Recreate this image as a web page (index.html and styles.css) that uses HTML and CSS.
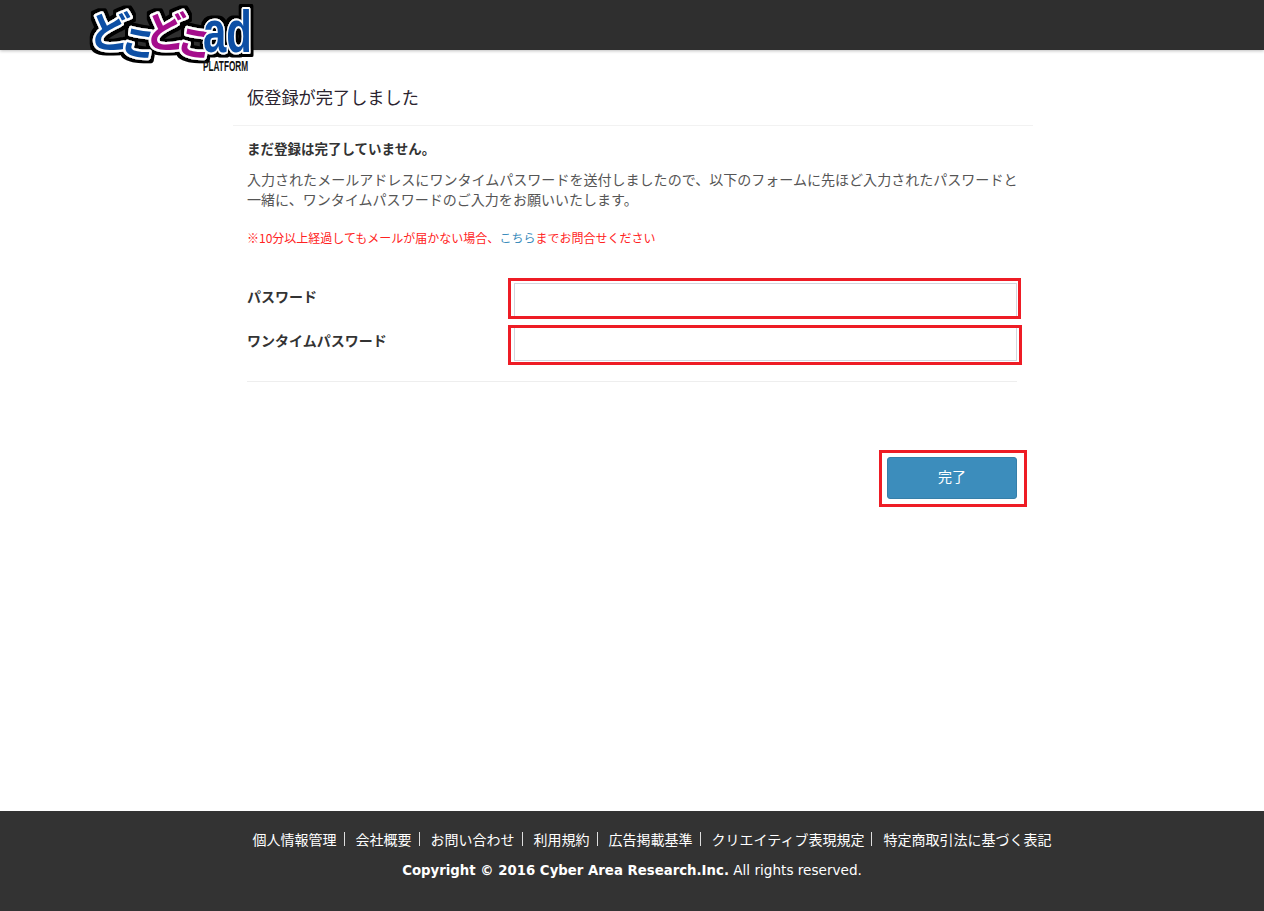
FILE: index.html
```html
<!DOCTYPE html>
<html lang="ja">
<head>
<meta charset="utf-8">
<title>仮登録が完了しました</title>
<link rel="stylesheet" href="styles.css">
</head>
<body>
<header class="site-header">
  <a class="logo" href="#" aria-label="どこどこad PLATFORM">
    <svg width="176" height="72" viewBox="0 0 176 72">
      <defs>
        <filter id="logo-outline" x="-5%" y="-10%" width="110%" height="120%">
          <feMorphology in="SourceAlpha" operator="dilate" radius="2.5" result="fat"/>
          <feFlood flood-color="#000"/>
          <feComposite in2="fat" operator="in" result="edge"/>
          <feMerge>
            <feMergeNode in="edge"/>
            <feMergeNode in="SourceGraphic"/>
          </feMerge>
        </filter>
      </defs>
      <g filter="url(#logo-outline)">
        <text class="logo-word"><tspan class="kana blue" x="5" y="45">ど</tspan><tspan class="kana small blue" x="36" y="50" rotate="10">こ</tspan><tspan class="kana purple" x="61" y="45">ど</tspan><tspan class="kana small purple" x="92" y="50" rotate="10">こ</tspan></text>
        <text class="latin" transform="translate(119 50) scale(.71 1)">ad</text>
      </g>
      <text class="platform" transform="translate(119 69) scale(.55 1)">PLATFORM</text>
    </svg>
  </a>
</header>
<main class="content">
  <h1 class="title">仮登録が完了しました</h1>
  <div class="body">
    <p class="lead">まだ登録は完了していません。</p>
    <p class="desc">入力されたメールアドレスにワンタイムパスワードを送付しましたので、以下のフォームに先ほど入力されたパスワードと一緒に、ワンタイムパスワードのご入力をお願いいたします。</p>
    <p class="notice">※10分以上経過してもメールが届かない場合、<a href="#">こちら</a>までお問合せください</p>
    <form class="form">
      <div class="row">
        <label class="label">パスワード</label>
        <div class="field">
          <input class="input" type="password">
          <span class="mark mark-a"></span>
        </div>
      </div>
      <div class="row">
        <label class="label">ワンタイムパスワード</label>
        <div class="field">
          <input class="input" type="text">
          <span class="mark mark-b"></span>
        </div>
      </div>
      <div class="actions">
        <div class="button-wrap">
          <button class="button" type="button">完了</button>
          <span class="mark mark-c"></span>
        </div>
      </div>
    </form>
  </div>
</main>
<footer class="site-footer">
  <ul class="links">
    <li><a href="#">個人情報管理</a></li>
    <li><a href="#">会社概要</a></li>
    <li><a href="#">お問い合わせ</a></li>
    <li><a href="#">利用規約</a></li>
    <li><a href="#">広告掲載基準</a></li>
    <li><a href="#">クリエイティブ表現規定</a></li>
    <li><a href="#">特定商取引法に基づく表記</a></li>
  </ul>
  <p class="copy"><strong>Copyright © 2016 Cyber Area Research.Inc.</strong> All rights reserved.</p>
</footer>
</body>
</html>
```
FILE: styles.css
```css
* { box-sizing: border-box; }
html, body { height: 100%; }
body {
  margin: 0;
  min-height: 911px;
  display: flex;
  flex-direction: column;
  background: #fff;
  color: #333;
  font-family: "Noto Sans CJK JP", sans-serif;
  font-size: 14px;
}
a { text-decoration: none; }

.site-header {
  position: relative;
  height: 50px;
  flex: none;
  background: #2f2f2f;
  box-shadow: 0 1px 3px rgba(0, 0, 0, .25);
}
.logo { position: absolute; left: 84px; top: 2px; display: block; }
.kana {
  font: 700 42px "Noto Sans CJK JP", sans-serif;
  stroke: #fff;
  stroke-width: 5px;
  stroke-linejoin: round;
  paint-order: stroke;
}
.kana.small { font-size: 34px; font-weight: 900; }
.blue { fill: #0a50a5; }
.purple { fill: #a5108c; }
.latin {
  font: 700 59px "Liberation Sans", sans-serif;
  fill: #0a50a5;
  stroke: #fff;
  stroke-width: 4px;
  stroke-linejoin: round;
  paint-order: stroke;
}
.platform { font: 700 15px "Liberation Sans", sans-serif; fill: #111; }

.content {
  flex: 1;
  width: 800px;
  margin-left: 233px;
}
.title {
  margin: 0;
  height: 76px;
  padding: 34px 14px 0;
  border-bottom: 1px solid #f2f2f2;
  font-size: 17.2px;
  font-weight: 400;
  line-height: 26px;
  color: #2b2430;
}
.body { padding: 12px 15px 0 14px; }
.lead {
  margin: 0;
  font-size: 13.5px;
  font-weight: 700;
  line-height: 20px;
}
.desc {
  margin: 11px 0 0;
  width: 775px;
  font-size: 14.04px;
  line-height: 20px;
  color: #555;
}
.notice {
  margin: 20px 0 0;
  font-size: 12px;
  line-height: 18px;
  color: #f22;
}
.notice a { color: #3c8dbc; }

.form { margin-top: 36px; }
.row {
  display: flex;
  height: 44px;
}
.label {
  width: 267px;
  padding-top: 3px;
  font-size: 14px;
  font-weight: 700;
  line-height: 20px;
}
.field { position: relative; width: 503px; height: 34px; }
.input {
  display: block;
  width: 100%;
  height: 34px;
  border: 1px solid #d2d6de;
  background: #fff;
  outline: 0;
}
.mark {
  position: absolute;
  border: 3px solid #ee1c25;
  pointer-events: none;
}
.mark-a { left: -6px; top: -5px; width: 513px; height: 41px; }
.mark-b { left: -6px; top: -2px; width: 514px; height: 40px; }
.mark-c { left: -8px; top: -7px; width: 148px; height: 57px; }

.actions {
  display: flex;
  justify-content: flex-end;
  width: 770px;
  border-top: 1px solid #eee;
  margin-top: 10px;
  padding-top: 75px;
}
.button-wrap { position: relative; width: 130px; height: 42px; }
.button {
  display: block;
  width: 100%;
  height: 42px;
  padding: 0 0 5px;
  border: 1px solid #367fa9;
  border-radius: 3px;
  background: #3c8dbc;
  color: #fff;
  font: 14px "Noto Sans CJK JP", sans-serif;
}

.site-footer {
  flex: none;
  height: 100px;
  background: #333;
  color: #fff;
  padding-top: 18px;
  text-align: center;
}
.links {
  display: flex;
  justify-content: center;
  margin: 0;
  padding: 0 0 0 40px;
  list-style: none;
  font-size: 14px;
  line-height: 20px;
  white-space: nowrap;
}
.links li { display: flex; align-items: center; }
.links li + li { margin-left: 11px; }
.links li:not(:last-child)::after {
  content: "";
  width: 1px;
  height: 14px;
  margin-left: 7px;
  background: #ddd;
}
.links a { color: #fff; }
.copy {
  margin: 11px 0 0;
  font-family: "DejaVu Sans", sans-serif;
  font-size: 13.6px;
  line-height: 20px;
}
.copy strong { font-size: 13.3px; }
```
